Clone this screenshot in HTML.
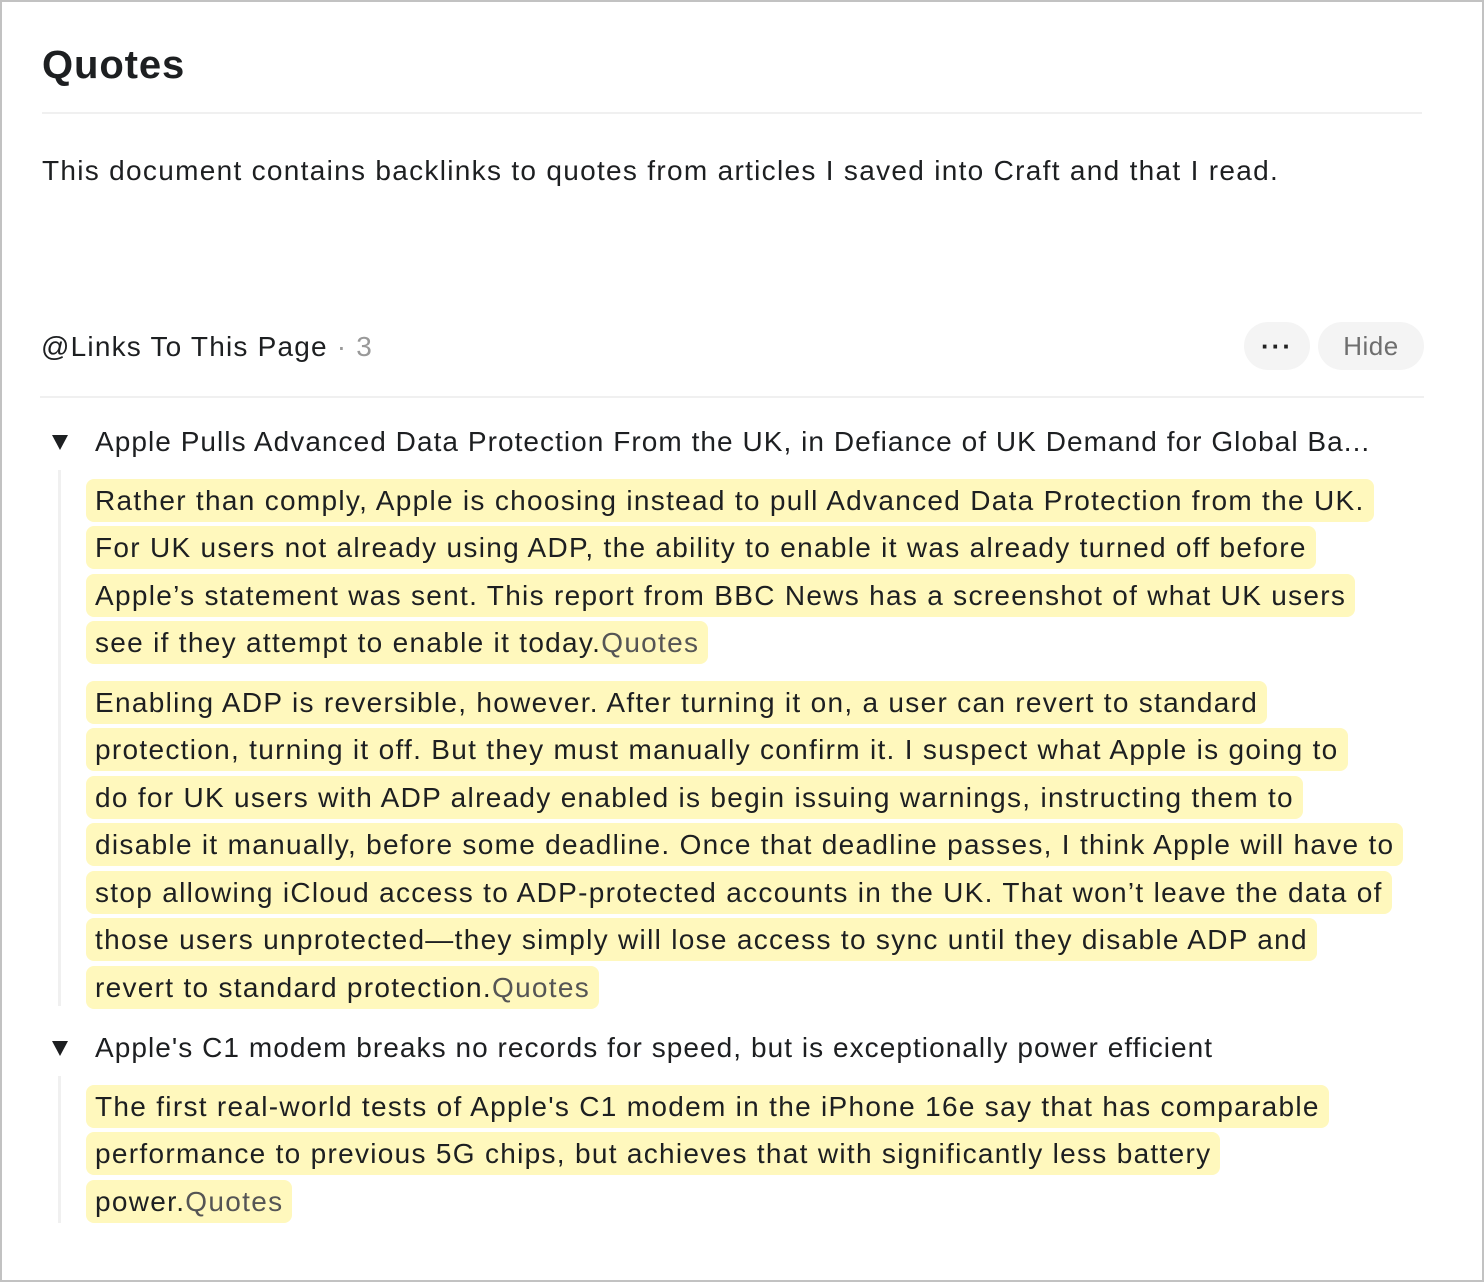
<!DOCTYPE html>
<html><head><meta charset="utf-8"><style>
*{margin:0;padding:0;box-sizing:border-box}
html,body{width:1484px;height:1282px;background:#fff;overflow:hidden}
body{font-family:"Liberation Sans",sans-serif;color:#1d1f21;position:relative;letter-spacing:1.3px}
.frame{position:absolute;left:0;top:0;width:1484px;height:1282px;border:2px solid #c2c2c2}
.a{position:absolute;white-space:nowrap}
.title{left:42px;top:42px;font-size:40px;font-weight:bold;line-height:46px;letter-spacing:0.9px}
.sep{position:absolute;height:2px;background:#f0f0f0}
.body{left:42px;top:154px;font-size:28px;line-height:34px}
.hdr{left:41px;top:330px;font-size:28px;line-height:34px;letter-spacing:1.2px}
.hdr .n{color:#999}
.btn{position:absolute;top:322px;height:48px;border-radius:24px;background:#f4f4f4;color:#6e6e6e;font-size:26px;line-height:48px;text-align:center;letter-spacing:0.5px}
.h2{left:95px;font-size:28px;line-height:34px;letter-spacing:1.05px}
.tri{position:absolute;left:52px;width:0;height:0;border-left:8px solid transparent;border-right:8px solid transparent;border-top:15px solid #1d1f21}
.vl{position:absolute;left:58px;width:3px;background:#f0f0f0}
.hl{position:absolute;left:86px;height:43px;background:#fff8bd;border-radius:8px;padding:0 9px 0 9px;font-size:28px;line-height:43px;white-space:nowrap}
.q{color:#555}
</style></head><body>
<div class="frame"></div>
<div class="a title">Quotes</div>
<div class="sep" style="left:42px;top:112px;width:1380px"></div>
<div class="a body">This document contains backlinks to quotes from articles I saved into Craft and that I read.</div>
<div class="a hdr">@Links To This Page <span class="n">· 3</span></div>
<div class="btn" style="left:1244px;width:66px;color:#222;font-weight:bold;letter-spacing:2px">···</div>
<div class="btn" style="left:1318px;width:106px">Hide</div>
<div class="sep" style="left:40px;top:396px;width:1384px"></div>

<div class="tri" style="top:435px"></div>
<div class="a h2" style="top:425px">Apple Pulls Advanced Data Protection From the UK, in Defiance of UK Demand for Global Ba...</div>
<div class="vl" style="top:470px;height:536px"></div>
<div class="hl" style="top:479px">Rather than comply, Apple is choosing instead to pull Advanced Data Protection from the UK.</div>
<div class="hl" style="top:526px">For UK users not already using ADP, the ability to enable it was already turned off before</div>
<div class="hl" style="top:574px">Apple’s statement was sent. This report from BBC News has a screenshot of what UK users</div>
<div class="hl" style="top:621px">see if they attempt to enable it today.<span class="q">Quotes</span></div>
<div class="hl" style="top:681px">Enabling ADP is reversible, however. After turning it on, a user can revert to standard</div>
<div class="hl" style="top:728px">protection, turning it off. But they must manually confirm it. I suspect what Apple is going to</div>
<div class="hl" style="top:776px">do for UK users with ADP already enabled is begin issuing warnings, instructing them to</div>
<div class="hl" style="top:823px">disable it manually, before some deadline. Once that deadline passes, I think Apple will have to</div>
<div class="hl" style="top:871px">stop allowing iCloud access to ADP-protected accounts in the UK. That won’t leave the data of</div>
<div class="hl" style="top:918px">those users unprotected—they simply will lose access to sync until they disable ADP and</div>
<div class="hl" style="top:966px">revert to standard protection.<span class="q">Quotes</span></div>

<div class="tri" style="top:1041px"></div>
<div class="a h2" style="top:1031px">Apple's C1 modem breaks no records for speed, but is exceptionally power efficient</div>
<div class="vl" style="top:1076px;height:147px"></div>
<div class="hl" style="top:1085px">The first real-world tests of Apple's C1 modem in the iPhone 16e say that has comparable</div>
<div class="hl" style="top:1132px">performance to previous 5G chips, but achieves that with significantly less battery</div>
<div class="hl" style="top:1180px">power.<span class="q">Quotes</span></div>
</body></html>
